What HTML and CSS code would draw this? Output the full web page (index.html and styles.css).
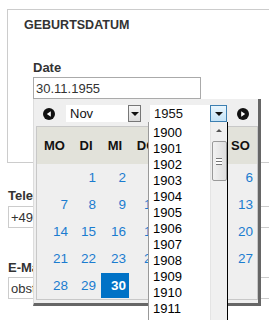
FILE: index.html
```html
<!DOCTYPE html>
<html lang="de">
<head>
    <meta charset="UTF-8">
    <meta name="viewport" content="width=device-width, initial-scale=1.0">
    <title>Geburtsdatum</title>
    <link rel="stylesheet" href="styles.css">
</head>
<body>
    <div class="page">
        <div class="group">
            <h2 class="group-title">GEBURTSDATUM</h2>
            <div class="date-field">
                <label class="label">Date</label>
                <div class="date-wrap">
                    <input class="input date-input" type="text" value="30.11.1955">

                    <!-- Kalender -->
                    <div class="datepicker">
                        <div class="dp-nav">
                            <svg class="dp-arrow" width="12" height="12" viewBox="0 0 12 12"><circle cx="6" cy="6" r="6" fill="#111"/><polygon points="7.8,3.2 3.8,6 7.8,8.8" fill="#fff"/></svg>
                            <div class="dp-select dp-month">
                                <span class="dp-value">Nov</span>
                                <span class="dp-btn"><span class="caret"></span></span>
                            </div>
                            <div class="dp-select dp-year">
                                <span class="dp-value">1955</span>
                                <span class="dp-btn dp-btn-active"><span class="caret"></span></span>

                                <!-- geöffnete Jahresliste -->
                                <div class="year-list">
                                    <ul class="year-items">
                                        <li>1900</li>
                                        <li>1901</li>
                                        <li>1902</li>
                                        <li>1903</li>
                                        <li>1904</li>
                                        <li>1905</li>
                                        <li>1906</li>
                                        <li>1907</li>
                                        <li>1908</li>
                                        <li>1909</li>
                                        <li>1910</li>
                                        <li>1911</li>
                                    </ul>
                                    <div class="year-scroll">
                                        <span class="scroll-up"></span>
                                        <span class="scroll-thumb"><span class="grip"></span></span>
                                    </div>
                                </div>
                            </div>
                            <svg class="dp-arrow" width="12" height="12" viewBox="0 0 12 12"><circle cx="6" cy="6" r="6" fill="#111"/><polygon points="4.2,3.2 8.2,6 4.2,8.8" fill="#fff"/></svg>
                        </div>
                        <div class="dp-cal">
                            <table class="dp-table">
                                <thead>
                                    <tr><th>MO</th><th>DI</th><th>MI</th><th>DO</th><th>FR</th><th>SA</th><th>SO</th></tr>
                                </thead>
                                <tbody>
                                    <tr><td></td><td><a href="#">1</a></td><td><a href="#">2</a></td><td><a href="#">3</a></td><td><a href="#">4</a></td><td><a href="#">5</a></td><td><a href="#">6</a></td></tr>
                                    <tr><td><a href="#">7</a></td><td><a href="#">8</a></td><td><a href="#">9</a></td><td><a href="#">10</a></td><td><a href="#">11</a></td><td><a href="#">12</a></td><td><a href="#">13</a></td></tr>
                                    <tr><td><a href="#">14</a></td><td><a href="#">15</a></td><td><a href="#">16</a></td><td><a href="#">17</a></td><td><a href="#">18</a></td><td><a href="#">19</a></td><td><a href="#">20</a></td></tr>
                                    <tr><td><a href="#">21</a></td><td><a href="#">22</a></td><td><a href="#">23</a></td><td><a href="#">24</a></td><td><a href="#">25</a></td><td><a href="#">26</a></td><td><a href="#">27</a></td></tr>
                                    <tr><td><a href="#">28</a></td><td><a href="#">29</a></td><td><a href="#" class="selected">30</a></td><td></td><td></td><td></td><td></td></tr>
                                </tbody>
                            </table>
                        </div>
                    </div>
                </div>
            </div>
        </div>

        <div class="field field-phone">
            <label class="label">Telefon</label>
            <input class="input wide" type="text" value="+49 711 2345678">
        </div>
        <div class="field field-mail">
            <label class="label">E-Mail</label>
            <input class="input wide" type="text" value="obst@beispiel.de">
        </div>
    </div>
</body>
</html>
```

FILE: styles.css
```css
/* Grundlayout */
html {
    overflow: hidden;
}

body {
    margin: 0;
    padding: 0;
    min-height: 320px;
    background-color: #fff;
    font-family: "Liberation Sans", Arial, sans-serif;
    color: #333;
}

.page {
    padding: 9px 0 0 7px;
    width: 360px;
}

.group {
    border: 1px solid #ccc;
    padding: 8px 0 63px 16px;
}

.group-title {
    margin: 0;
    font-size: 12.5px;
    line-height: 15px;
    font-weight: bold;
    color: #333;
}

.date-field {
    margin: 27px 0 0 9px;
}

.label {
    display: block;
    font-size: 13px;
    line-height: 16px;
    font-weight: bold;
    color: #333;
    margin-bottom: 1px;
}

.input {
    box-sizing: border-box;
    height: 22px;
    border: 1px solid #aaa;
    padding: 0 2px;
    font-family: "Liberation Sans", Arial, sans-serif;
    font-size: 13px;
    color: #333;
    background: #fff;
    outline: none;
}

.date-input {
    width: 168px;
}

.wide {
    width: 330px;
    border-color: #ccc;
}

.field {
    margin-left: 1px;
}

.field-phone {
    margin-top: 25px;
}

.field-phone .label {
    margin-bottom: 2px;
}

.field-mail {
    margin-top: 32px;
}

/* Kalender */
.date-wrap {
    position: relative;
}

.datepicker {
    position: absolute;
    top: 100%;
    left: 0;
    z-index: 2;
    box-sizing: border-box;
    width: 228px;
    background-color: #efefef;
    border-left: 1px solid #ddd;
    border-right: 3px solid #666;
    border-bottom: 3px solid #666;
}

.dp-nav {
    box-sizing: border-box;
    height: 27px;
    padding: 2px 9px 0 9px;
    display: flex;
    align-items: center;
}

.dp-arrow {
    flex: none;
    display: block;
}

.dp-select {
    position: relative;
    box-sizing: border-box;
    height: 17px;
    display: flex;
    align-items: center;
    background-color: #fff;
    font-size: 13px;
    color: #111;
}

.dp-month {
    width: 75px;
    margin: 0 9px 0 11px;
}

.dp-year {
    width: 77px;
    margin-right: 10px;
}

.dp-value {
    flex: 1;
    padding-left: 4px;
}

.dp-btn {
    box-sizing: border-box;
    width: 13px;
    height: 17px;
    border: 1px solid #777;
    background: linear-gradient(#f6f6f6, #dcdcdc);
    display: flex;
    align-items: center;
    justify-content: center;
}

.dp-btn-active {
    width: 17px;
    border-color: #3c7fb1;
    background: linear-gradient(#eaf6fd, #c4e3f7);
}

.caret {
    width: 0;
    height: 0;
    border-left: 4px solid transparent;
    border-right: 4px solid transparent;
    border-top: 4px solid #111;
    margin-top: 1px;
}

.dp-cal {
    margin: 0 0 3px 2px;
    border: 1px solid #c8c8c8;
}

.dp-table {
    width: 220px;
    border-collapse: collapse;
    table-layout: fixed;
}

.dp-table th {
    height: 37px;
    padding: 0;
    background-color: #e2e2da;
    font-size: 13px;
    font-weight: bold;
    color: #111;
    text-align: center;
}

.dp-table th:nth-child(1) { width: 35px; }
.dp-table th:nth-child(2) { width: 28px; }
.dp-table th:nth-child(3) { width: 30px; }
.dp-table th:nth-child(4) { width: 33px; }
.dp-table th:nth-child(5) { width: 30px; }
.dp-table th:nth-child(6) { width: 31px; }
.dp-table th:nth-child(7) { width: 33px; }

.dp-table td {
    padding: 1px;
    height: 25px;
}

.dp-table td a {
    display: block;
    padding-right: 3px;
    line-height: 25px;
    text-align: right;
    font-size: 13.5px;
    color: #1b7ccf;
    text-decoration: none;
}

.dp-table td a.selected {
    background-color: #0072c6;
    color: #fff;
    font-weight: bold;
}

/* offene Auswahlliste Jahr */
.year-list {
    position: absolute;
    top: 100%;
    left: -2px;
    z-index: 3;
    box-sizing: border-box;
    width: 80px;
    height: 200px;
    display: flex;
    background-color: #fff;
    border-left: 1px solid #999;
    border-right: 1px solid #000;
}

.year-items {
    flex: 1;
    margin: 0;
    padding: 3px 0 0 4px;
    list-style: none;
}

.year-items li {
    font-size: 13px;
    line-height: 16px;
    height: 16px;
    color: #000;
}

.year-scroll {
    width: 16px;
    background-color: #f0f0f0;
    border-left: 1px solid #e4e4e4;
    display: flex;
    flex-direction: column;
    align-items: center;
}

.scroll-up {
    width: 0;
    height: 0;
    margin: 7px 0 9px;
    border-left: 3px solid transparent;
    border-right: 3px solid transparent;
    border-bottom: 3px solid #555;
}

.scroll-thumb {
    box-sizing: border-box;
    width: 15px;
    height: 40px;
    border: 1px solid #9a9a9a;
    border-radius: 2px;
    background: linear-gradient(to right, #f2f2f2, #dedede);
    display: flex;
    align-items: center;
    justify-content: center;
}

.grip {
    width: 6px;
    height: 5px;
    border-top: 1px solid #777;
    border-bottom: 1px solid #777;
    background: linear-gradient(#fff 0 2px, #777 2px 3px, #fff 3px);
}
```
